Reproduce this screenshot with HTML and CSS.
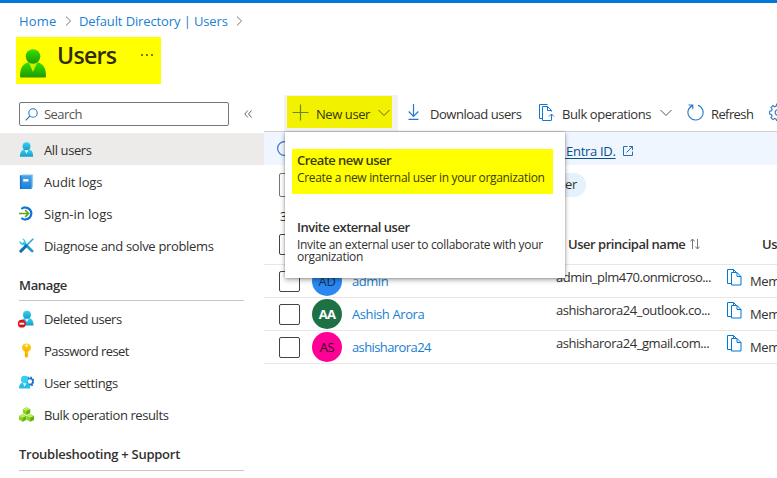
FILE: index.html
```html
<!DOCTYPE html>
<html lang="en">
<head>
<meta charset="utf-8">
<title>Users</title>
<link rel="stylesheet" href="styles.css">
</head>
<body>
<svg class="defs" width="0" height="0">
  <defs>
    <linearGradient id="cyan" x1="0" y1="0" x2="0" y2="1"><stop offset="0" stop-color="#32d4f5"/><stop offset="1" stop-color="#1a9ac8"/></linearGradient>
    <linearGradient id="green" x1="0" y1="0" x2="0" y2="1"><stop offset="0" stop-color="#35e000"/><stop offset="1" stop-color="#1f9900"/></linearGradient>
    <linearGradient id="blue" x1="0" y1="0" x2="0" y2="1"><stop offset="0" stop-color="#4aa5ee"/><stop offset="1" stop-color="#1a80d8"/></linearGradient>
    <linearGradient id="gold" x1="0" y1="0" x2="0" y2="1"><stop offset="0" stop-color="#ffd21c"/><stop offset="1" stop-color="#f8b500"/></linearGradient>
    <symbol id="copy" viewBox="0 0 15 17"><path d="M4.500 14.500H.5V.5h6l3 3M6.500.5v3" fill="none" stroke="#0078d4"/><path d="M4.500 3.500h5.500l4 4v8.500H4.500zM10 3.500v4h4" fill="#fff" stroke="#0078d4"/></symbol>
    <symbol id="down" viewBox="0 0 12 8"><path d="M.5 1l5.500 5.500L11.500 1" fill="none" stroke="currentColor"/></symbol>
    <symbol id="sep" viewBox="0 0 7 10"><path d="M1 .6L5.600 5 1 9.400" fill="none" stroke="#777"/></symbol>
  </defs>
</svg>
<div class="topbar"></div>
<nav class="crumbs">
  <a class="c-home">Home</a><svg class="sep" width="7" height="10"><use href="#sep"/></svg>
  <a class="c-dir">Default Directory | Users</a><svg class="sep" width="7" height="10"><use href="#sep"/></svg>
</nav>
<header class="title">
  <svg class="title-icon" width="28" height="30" viewBox="0 0 28 30"><path d="M1 28.500C1 20 4 15.500 9 14.500h10c5 1 8 5.500 8 14q0 1-1 1H2q-1 0-1-1z" fill="url(#green)"/><path d="M10 15l4 9 4-9z" fill="#c9f000"/><circle cx="14" cy="8.500" r="7.300" fill="url(#green)"/></svg>
  <h1>Users</h1>
  <span class="dots"><i></i><i></i><i></i></span>
</header>
<div class="layout">
  <aside class="sidebar">
    <div class="search-row">
      <div class="search"><svg width="13" height="13" viewBox="0 0 13 13" fill="none" stroke="#2c7cc5" stroke-width="1.100"><circle cx="8" cy="5" r="4.200"/><path d="M5 8L.7 12.300"/></svg><span class="s-search">Search</span></div>
      <svg class="collapse" width="8" height="8" viewBox="0 0 8 8" fill="none" stroke="#666"><path d="M3.800.5L.8 4l3 3.500M7.500.5l-3 3.500 3 3.500"/></svg>
    </div>
    <a class="item active"><svg viewBox="0 0 16 16"><path d="M1 15.700C1 10.500 3 8.500 5 8h6c2.500.5 4 2.500 4 7.700z" fill="url(#cyan)"/><path d="M6 8.500l2 4 2-4z" fill="#eefaff"/><circle cx="8" cy="4.500" r="4.200" fill="url(#cyan)"/></svg><span class="s-all">All users</span></a>
    <a class="item"><svg viewBox="0 0 16 16"><path d="M3 .5h12v14H3z" fill="#8acbf4"/><path d="M1 1.500h12.500V16H1z" fill="url(#blue)"/><path d="M1 1.500h1.500V16H1z" fill="#1872c5"/><path d="M4.500 5.500H10V8H4.500z" fill="#fff"/></svg><span class="s-audit">Audit logs</span></a>
    <a class="item"><svg viewBox="0 0 16 16" fill="none"><path d="M2.500 3.200a6.400 6.400 0 1 1 0 9.600" stroke="#1475d2" stroke-width="2.400"/><path d="M0 8h10M6.500 4.400L10.200 8l-3.700 3.600" stroke="#5da61b" stroke-width="1.700"/></svg><span class="s-sign">Sign-in logs</span></a>
    <a class="item"><svg viewBox="0 0 16 16" fill="none"><path d="M5.500 5.500l8.500 8.500" stroke="#209cc9" stroke-width="3" stroke-linecap="round"/><path d="M3 .5l2.600 3-2 2L.5 3C0 6 2.500 8.300 6 7.500 8.500 5 7 .5 3 .5z" fill="#32cbed"/><path d="M15.200.7L8 8" stroke="#27a4e0" stroke-width="1.600"/><path d="M7.500 8.500l-5.500 5.500" stroke="#156cae" stroke-width="3.200" stroke-linecap="round"/></svg><span class="s-diag">Diagnose and solve problems</span></a>
    <h2><span class="s-manage">Manage</span></h2>
    <a class="item"><svg viewBox="0 0 16 16" overflow="visible"><path d="M2 15.500C2 10 4 8 6 7.500h5c2.500.5 4.500 3 4.500 8z" fill="url(#cyan)"/><path d="M6.500 8l2 4 2-4z" fill="#fff"/><circle cx="8.500" cy="4" r="4.200" fill="url(#cyan)"/><circle cx="3" cy="13.500" r="4.200" fill="#e00b1c"/><path d="M.4 12.500h5.200v2H.4z" fill="#fff"/></svg><span class="s-deleted">Deleted users</span></a>
    <a class="item"><svg viewBox="0 0 16 16"><path d="M6.200 8h3.600v6L8 16l-1.800-2z" fill="url(#gold)"/><path d="M8 .5c3 0 4.800 1.500 4.800 4S11 9.300 8 9.300s-4.800-2-4.800-4.800S5 .5 8 .5z" fill="url(#gold)"/><circle cx="8" cy="2.800" r="1.200" fill="#fff"/><path d="M7.200 9v5" stroke="#e99c00" stroke-width=".8"/></svg><span class="s-password">Password reset</span></a>
    <a class="item"><svg viewBox="0 0 16 16"><circle cx="11.500" cy="7" r="3.300" fill="none" stroke="#1874ce" stroke-width="1.800"/><circle cx="11.500" cy="7" r="4.700" fill="none" stroke="#1874ce" stroke-width="1.500" stroke-dasharray="1.850"/><path d="M0 14.500C0 10 2 8.500 4 8h4c2.500.5 4 3 4 6.500z" fill="#28bde6"/><path d="M4 8.500l2 4 2-4z" fill="#d8f7ff"/><circle cx="6" cy="4.800" r="3.900" fill="#32cff0"/></svg><span class="s-settings">User settings</span></a>
    <a class="item"><svg viewBox="0 0 16 16" overflow="visible"><g id="cube"><path d="M8 .3l3.900 2v4.200L8 8.500 4.100 6.500V2.300z" fill="#8bd321"/><path d="M8 .3l3.900 2L8 4.300l-3.900-2z" fill="#b9ef50"/><path d="M8 4.300l3.900-2v4.200L8 8.500z" fill="#65b016"/></g><use href="#cube" x="-4.100" y="7.200"/><use href="#cube" x="4.100" y="7.200"/></svg><span class="s-bulk">Bulk operation results</span></a>
    <h2 class="second"><span class="s-trouble">Troubleshooting + Support</span></h2>
  </aside>
  <main class="content">
    <div class="toolbar">
      <div class="new"><div class="new-mark">
        <svg width="17" height="17" viewBox="0 0 17 17"><path d="M8.500.5v16M.5 8.500h16" stroke="#66882c" stroke-width="1.200"/></svg><span class="t-new">New user</span><svg class="chev" width="12" height="8"><use href="#down"/></svg>
      </div></div>
      <svg class="i-download" width="11" height="16" viewBox="0 0 11 16" fill="none" stroke="#2679c8" stroke-width="1.200"><path d="M5.500 0v12M.7 7.500l4.800 4.800 4.800-4.800M.5 15.300h10"/></svg><span class="t-download">Download users</span>
      <svg class="i-bulk" width="16" height="17" viewBox="0 0 16 17" fill="none" stroke="#1477d0"><path d="M3.500 14.500h-3V.5h8M3.500 16.500v-14h5l4 4v1M3.500 16.500h8.500M8.500 2.500v4h4M12.500 16.500v-6M10 12.500l2.500-2.500 2.500 2.500"/></svg><span class="t-bulk">Bulk operations</span><svg class="chev i-chev" width="12" height="8"><use href="#down"/></svg>
      <svg class="i-refresh" width="17" height="17" viewBox="0 0 17 17" fill="none" stroke="#2678cc" stroke-width="1.100"><path d="M11 1.200a7.600 7.600 0 1 1-5.500.2M1.500 1h4.300v4.300M5.500 1.300L3 3.800"/></svg><span class="t-refresh">Refresh</span>
      <svg class="i-gear" width="18" height="18" viewBox="0 0 18 18" fill="none" stroke="#3e7dc5" stroke-width="1.200"><path d="M7.700 1h2.600l.5 2 1.500.7 1.800-1.100 1.900 1.900-1.100 1.800.7 1.500 2 .5v2.600l-2 .5-.7 1.500 1.100 1.800-1.900 1.900-1.800-1.100-1.500.7-.5 2H7.700l-.5-2-1.500-.7-1.800 1.100L2 14.700l1.100-1.800-.7-1.500-2-.5V8.300l2-.5.7-1.500L2 4.500l1.900-1.900 1.800 1.100L7.200 3z"/><circle cx="9" cy="9.500" r="2.800"/></svg>
    </div>
    <div class="info"><svg class="i-info" width="15" height="15" viewBox="0 0 15 15"><circle cx="7.500" cy="7.500" r="6.900" fill="none" stroke="#3d6fd0" stroke-width="1.200"/></svg><a class="entra">&nbsp;Entra ID.</a><svg class="i-open" width="10" height="10" viewBox="0 0 10 10" fill="none" stroke="#2672a8"><path d="M4.500.5h-4v9h9v-4M6 .5h3.500V4M3.500 6.500l6-6"/></svg></div>
    <div class="filters"><div class="filter-search"></div><div class="pill">er</div></div>
    <div class="count">3</div>
    <div class="row head"><span class="box"></span><span class="h-upn">User principal name</span><svg class="sort" width="10" height="12" viewBox="0 0 10 12" fill="none" stroke="#777"><path d="M2.500 11V1M.3 3.500L2.500 1l2.200 2.500M7.500 1v10M5.300 8.500L7.500 11l2.200-2.500"/></svg><span class="h-type">User type</span></div>
    <div class="row"><span class="box"></span><span class="avatar ad">AD</span><a class="name"><span class="n-admin">admin</span></a><span class="upn"><span class="u-admin">admin_plm470.onmicroso...</span></span><svg class="copy" width="15" height="17"><use href="#copy"/></svg><span class="type">Member</span></div>
    <div class="row"><span class="box"></span><span class="avatar aa">AA</span><a class="name"><span class="n-arora">Ashish Arora</span></a><span class="upn"><span class="u-outlook">ashisharora24_outlook.co...</span></span><svg class="copy" width="15" height="17"><use href="#copy"/></svg><span class="type">Member</span></div>
    <div class="row"><span class="box"></span><span class="avatar as">AS</span><a class="name"><span class="n-ash">ashisharora24</span></a><span class="upn"><span class="u-gmail">ashisharora24_gmail.com...</span></span><svg class="copy" width="15" height="17"><use href="#copy"/></svg><span class="type">Member</span></div>
    <div class="menu">
      <div class="option marked"><b><span class="m-create">Create new user</span></b><p><span class="m-internal">Create a new internal user in your organization</span></p></div>
      <div class="option"><b><span class="m-invite">Invite external user</span></b><p><span class="m-external">Invite an external user to collaborate with your</span><br><span class="m-org">organization</span></p></div>
    </div>
  </main>
</div>
</body>
</html>
```
FILE: styles.css
```css
* { box-sizing: border-box; }
body { margin: 0; width: 777px; height: 478px; overflow: hidden; background: #fff; color: #323130; font: 13px/18px "Open Sans", sans-serif; letter-spacing: -.33px; white-space: nowrap; }
svg { display: block; flex: none; }
span, a { flex: none; }
.defs { position: absolute; }
.topbar { height: 3px; background: #0078d9; }
.crumbs { height: 34px; padding: 2px 0 0 19px; display: flex; align-items: center; color: #1b80d2; letter-spacing: -.12px; }
.c-home { width: 46px; letter-spacing: .2px; }
.c-dir { width: 157px; margin-left: 7px; }
.title { width: 145px; height: 47px; margin-left: 16px; background: #ff0; display: flex; align-items: flex-start; }
.title-icon { margin: 11px 0 0 3px; }
h1 { width: 84px; margin: 1px 0 0 10px; font-size: 23px; font-weight: 600; line-height: 34px; letter-spacing: -.7px; color: #2d2d07; }
.dots { display: flex; gap: 3px; margin-top: 17px; }
.dots i { width: 2px; height: 2px; background: #77770a; }
.layout { display: grid; grid-template-columns: 264px 513px; }
.sidebar { padding-top: 18px; }
.search-row { height: 24px; display: flex; align-items: center; padding-left: 19px; margin-bottom: 7px; }
.search { width: 210px; height: 24px; border: 1px solid #777; border-radius: 2px; display: flex; align-items: center; gap: 6px; padding-left: 5px; color: #555; letter-spacing: -.55px; }
.collapse { margin-left: 15px; }
.item { height: 32px; display: flex; align-items: center; padding: 2px 0 0 19px; }
.item svg { width: 15px; height: 15px; margin: -1px 10px 0 0; }
.active { background: #edebe9; }
.s-all, .s-settings { letter-spacing: -.4px; }
.s-audit { letter-spacing: -.15px; }
.s-sign { letter-spacing: -.02px; }
.s-deleted { letter-spacing: -.45px; }
.s-password { letter-spacing: -.56px; }
.s-bulk { letter-spacing: -.41px; }
.s-trouble { letter-spacing: -.26px; }
h2 { margin: 15px 20px 1px 19px; height: 25px; border-bottom: 1px solid #c8c6c4; font-size: 13px; line-height: 18px; font-weight: 600; }
h2.second { margin-top: 15px; height: 26px; }
.content { position: relative; padding-top: 11px; overflow: hidden; }
.toolbar { height: 37px; display: flex; align-items: center; border-bottom: 1px solid #d0cece; padding-top: 1px; letter-spacing: -.42px; }
.new { width: 114px; height: 36px; margin: -1px 0 0 20px; flex: none; background: #f3f2f1; padding: 1px 0 0 3px; }
.new-mark { width: 105px; height: 32px; background: #f2f200; display: flex; align-items: center; padding: 3px 0 0 5px; color: #37370c; }
.new-mark svg { margin-top: -3px; }
.new-mark .chev { color: #66661a; margin-top: -2px; }
.new-mark .t-new { width: 62px; margin-left: 7px; }
.chev { color: #555; }
.i-download { margin: -3px 11px 0 10px; }
.t-download { width: 91px; letter-spacing: -.47px; }
.i-bulk { margin: -3px 7px 0 18px; }
.t-bulk { width: 89px; }
.i-chev { margin: -2px 0 0 9px; }
.i-refresh { margin: -3px 8px 0 15px; }
.t-refresh { width: 42px; letter-spacing: -.6px; margin-left: -1px; }
.i-gear { margin: -3px 0 0 16px; }
.info { height: 33px; background: #eff6ff; display: flex; align-items: center; color: #07508c; }
.i-info { margin-left: 13px; }
.entra { margin: 5px 7px 0 271px; text-decoration: underline; text-underline-offset: 2px; letter-spacing: -.3px; }
.i-open { margin-top: 5px; }
.filters { display: flex; height: 32px; padding: 8px 0 0 15px; }
.filter-search { width: 200px; height: 24px; border: 1px solid #777; border-radius: 2px; }
.pill { margin-left: 50px; width: 57px; height: 24px; border-radius: 12px; padding: 2px 9px 0 0; text-align: right; background: #e5f1fb; }
.count { height: 27px; padding: 10px 0 0 16px; }
.row { height: 33px; display: flex; align-items: center; border-bottom: 1px solid #e8e7e6; }
.head { height: 41px; font-weight: 600; }
.box { width: 21px; height: 21px; margin-left: 15px; border: 1px solid #444; border-radius: 2px; }
.head .h-upn { width: 117px; margin-left: 268px; letter-spacing: -.48px; }
.sort { margin-left: 5px; }
.h-type { margin-left: 62px; }
.avatar { width: 30px; height: 30px; border-radius: 50%; margin: 0 10px 0 12px; text-align: center; line-height: 30px; }
.ad { background: #2b88f0; color: #14315d; }
.aa { background: #1e7145; color: #fff; font-weight: 700; letter-spacing: -.8px; }
.as { background: #ff0097; color: #320021; }
.name { width: 204px; color: #1780d2; letter-spacing: -.45px; }
.n-arora { letter-spacing: -.4px; }
.n-ash { letter-spacing: -.6px; }
.upn { width: 171px; margin-top: -8px; letter-spacing: -.45px; }
.u-admin { letter-spacing: -.52px; }
.copy { margin-top: -8px; }
.type { margin-left: 8px; }
.menu { position: absolute; left: 21px; top: 48px; width: 280px; height: 146px; padding: 17px 12px 0 7px; background: #fff; box-shadow: 0 2px 5px #0005, 0 0 2px #0004; }
.option { height: 45px; padding: 3px 0 0 5px; margin-bottom: 22px; }
.option b { display: block; font-weight: 600; line-height: 17px; letter-spacing: -.55px; }
.m-invite { letter-spacing: -.48px; }
.option p { margin: 3px 0 0; font-size: 12px; line-height: 12px; letter-spacing: -.32px; }
.marked { background: #ff0; color: #3b3b0b; }
```
